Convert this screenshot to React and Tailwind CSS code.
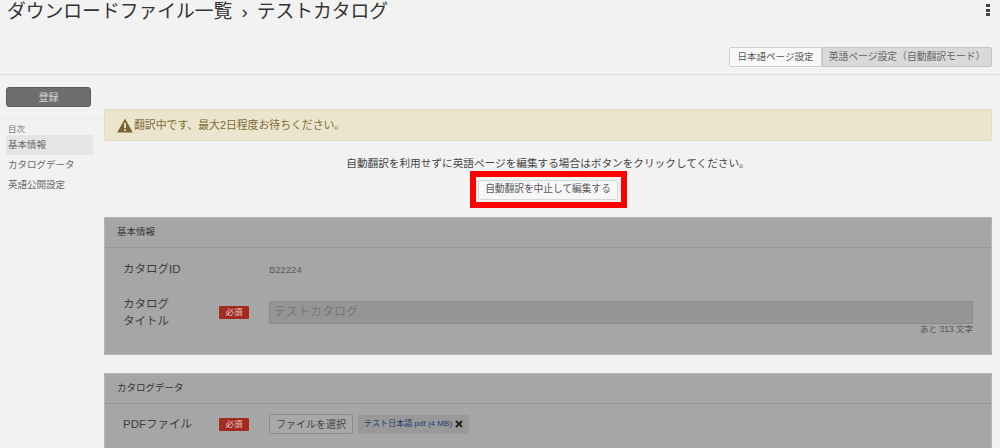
const font = { fontFamily: '"Liberation Sans", "Noto Sans CJK JP", sans-serif' };

function Badge() {
  return (
    <span className="flex h-[13px] w-[30px] shrink-0 items-center justify-center rounded-[1px] bg-[#a32a1e] text-[8.5px] leading-none text-[#e6cfcb]">
      必須
    </span>
  );
}

function Panel({ title, children, className }) {
  return (
    <section className={`border border-[#b4b4b4] bg-[#a6a6a6] ${className}`}>
      <h2 className="flex h-[30px] items-center border-b border-[#969696] pl-3 text-[9.5px] font-normal text-[#333]">
        {title}
      </h2>
      {children}
    </section>
  );
}

export default function App() {
  return (
    <div style={font} className="h-[448px] w-[1000px] overflow-hidden bg-[#f2f2f2] text-[#444]">
      <header className="relative h-[75px] border-b border-[#dcdcdc]">
        <div className="flex justify-between pl-[7px] pr-[10px]">
          <h1 className="whitespace-nowrap text-[18.8px] font-normal leading-[24px] text-[#333]">
            ダウンロードファイル一覧<span className="mx-[9px]">›</span>テストカタログ
          </h1>
          <div className="flex flex-col gap-[1.5px] pt-1">
            <i className="block h-[3px] w-[4px] bg-[#444]" />
            <i className="block h-[3px] w-[4px] bg-[#444]" />
            <i className="block h-[3px] w-[4px] bg-[#444]" />
          </div>
        </div>
        <div className="mt-[23px] flex justify-end pr-2">
          <div className="flex h-[20px] items-center">
            <span className="flex h-full w-[93px] items-center justify-center rounded-l-[2px] border border-[#cfcfcf] bg-[#f8f8f8] text-[9.5px] text-[#555]">
              日本語ページ設定
            </span>
            <span className="flex h-full w-[170px] items-center justify-center rounded-r-[2px] border border-[#c4c4c4] bg-[#d9d9d9] text-[9.8px] text-[#666]">
              英語ページ設定（自動翻訳モード）
            </span>
          </div>
        </div>
      </header>

      <div className="flex">
        <aside className="w-[104px] shrink-0">
          <div className="h-[44px] border-b border-[#e8e8e8] pl-[6px] pt-[12px]">
            <button className="flex h-[20px] w-[85px] items-center justify-center rounded-[3px] border border-[#5c5c5c] bg-[#6e6e6e] text-[10px] text-[#d4d4d4]">
              登録
            </button>
          </div>
          <p className="pl-[8px] pt-[5px] text-[8.5px] leading-[11px] text-[#777]">目次</p>
          <nav className="pl-[6px] text-[9.5px] text-[#666]">
            <div className="flex h-[20px] w-[87px] items-center bg-[#e5e5e5] pl-[2px]">基本情報</div>
            <div className="flex h-[20px] items-center pl-[2px]">カタログデータ</div>
            <div className="flex h-[20px] items-center pl-[2px]">英語公開設定</div>
          </nav>
        </aside>

        <main className="w-[888px] pt-[34px]">
          <div className="flex h-[32px] items-center gap-[1px] rounded-[2px] border border-[#e3dcc0] bg-[#ebe5cd] pl-[12px] text-[10.85px] text-[#7d6a35]">
            <svg width="16" height="15" viewBox="0 0 16 15" className="shrink-0">
              <path d="M8 0.5 L15.8 14.5 H0.2 Z" fill="#786530" />
              <rect x="7.1" y="4.8" width="1.8" height="5.2" fill="#ebe5cd" />
              <rect x="7.1" y="11" width="1.8" height="1.9" fill="#ebe5cd" />
            </svg>
            <span>翻訳中です、最大2日程度お待ちください。</span>
          </div>

          <p className="mt-[15px] text-center text-[10.65px] leading-[14px] text-[#444]">
            自動翻訳を利用せずに英語ページを編集する場合はボタンをクリックしてください。
          </p>
          <div className="mt-[1px] flex justify-center">
            <div className="box-border flex h-[37px] w-[157px] items-center justify-center border-[6px] border-[#fe0000] bg-[#f2f2f2]">
              <button className="flex h-[20px] w-[140px] shrink-0 items-center justify-center rounded-[2px] border border-[#d8d8d8] bg-[#f7f7f7] text-[9.7px] text-[#555]">
                自動翻訳を中止して編集する
              </button>
            </div>
          </div>

          <Panel title="基本情報" className="mt-[9px] h-[138px]">
            <div className="flex h-[42px] items-center pl-[18px] pt-[2px] text-[11.5px] text-[#3c3c3c]">
              <span className="w-[146px]">カタログID</span>
              <span className="text-[9.5px] text-[#5c5c5c]">B22224</span>
            </div>
            <div className="mt-[4px] flex items-center pl-[18px] pr-[18px]">
              <span className="w-[96px] pt-[2px] text-[11.5px] leading-[17px] text-[#3c3c3c]">カタログ<br />タイトル</span>
              <Badge />
              <div className="ml-[20px] flex h-[23px] flex-1 items-center border border-[#8c8c8c] bg-[#959595] pl-1 text-[12px] text-[#777]">
                テストカタログ
              </div>
            </div>
            <p className="-mt-[6px] pr-[18px] text-right text-[8.5px] leading-[10px] text-[#555]">あと 313 文字</p>
          </Panel>

          <Panel title="カタログデータ" className="mt-[18px] h-[90px]">
            <div className="flex items-center pl-[18px] pt-[10px] text-[11.5px] text-[#3c3c3c]">
              <span className="w-[96px] pt-[2px]">PDFファイル</span>
              <Badge />
              <button className="ml-[20px] flex h-[20px] w-[84px] items-center justify-center rounded-[2px] border border-[#8f8f8f] bg-[#a8a8a8] text-[10px] text-[#444]">
                ファイルを選択
              </button>
              <div className="ml-[5px] flex h-[19px] w-[111px] items-center gap-[3px] bg-[#999] pl-[6px] text-[8.05px] text-[#233a72]">
                <span className="whitespace-nowrap">テスト日本語.pdf (4 MB)</span>
                <svg width="8" height="8" viewBox="0 0 8 8" className="shrink-0">
                  <path d="M1 1 L7 7 M7 1 L1 7" stroke="#222" strokeWidth="2" />
                </svg>
              </div>
            </div>
          </Panel>
        </main>
      </div>
    </div>
  );
}
